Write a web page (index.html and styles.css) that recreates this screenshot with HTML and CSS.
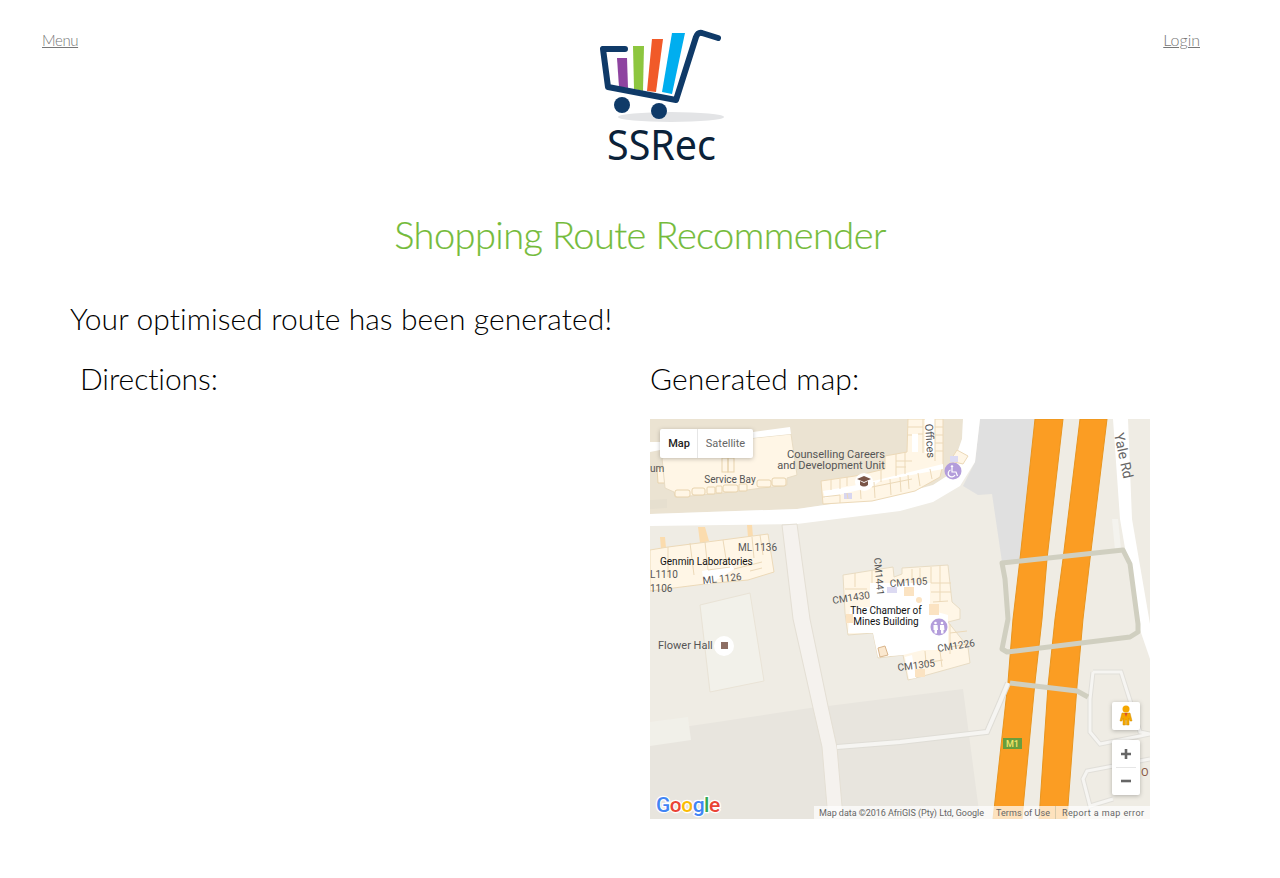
FILE: index.html
```html
<!DOCTYPE html>
<html lang="en">

<head>
    <title>SSRec - Shopping Route Recommender</title>
    <meta name="viewport" content="width=device-width, initial-scale=1.0">
    <link rel="stylesheet" href="styles.css">
</head>

<body>
    <header class="topbar">
        <a class="nav-link nav-menu" href="#">Menu</a>
        <svg class="logo" width="160" height="156" viewBox="0 0 160 156">
            <ellipse cx="91" cy="97" rx="53" ry="5" fill="#e3e4e6"/>
            <polygon points="37,38 47,38 48,68 39,67" fill="#8e44a0"/>
            <polygon points="53,26 64,26 63,71 54,69" fill="#8dc63f"/>
            <polygon points="72,19 83,19 76,72 67,71" fill="#f15a29"/>
            <polygon points="92,13 105,13 92,74 82,72" fill="#00aeef"/>
            <path d="M138,18 L122,13 Q118,12 116,17 L96,80 L28,67 L23,29 L45,29" fill="none" stroke="#0f3a68" stroke-width="6" stroke-linecap="round" stroke-linejoin="round"/>
            <circle cx="42" cy="85" r="8" fill="#0f3a68"/>
            <circle cx="79" cy="91" r="8" fill="#0f3a68"/>
            <text class="logo-text" x="27" y="140" textLength="109" lengthAdjust="spacingAndGlyphs">SSRec</text>
        </svg>
        <a class="nav-link nav-login" href="#">Login</a>
    </header>

    <h1 class="title">Shopping Route Recommender</h1>

    <main class="content">
        <h2 class="result">Your optimised route has been generated!</h2>
        <div class="columns">
            <section class="directions">
                <h3>Directions:</h3>
            </section>
            <section class="map-col">
                <h3>Generated map:</h3>
                <svg class="map" width="500" height="400" viewBox="0 0 500 400">
                    <rect width="500" height="400" fill="#efece4"/>

                    <!-- ground -->
                    <polygon points="0,313 160,289 178,287 313,270 330,400 0,400" fill="#e8e5de"/>
                    <polygon points="0,303 38,298 41,321 0,327" fill="#f1f0e9"/>
                    <polygon points="50,186 100,174 114,262 60,273" fill="#f2f1ea" stroke="#e9e3d6"/>
                    <polygon points="0,0 313,0 312,20 300,55 283,66 250,75 147,90 0,95" fill="#ebe3d2"/>
                    <polygon points="330,0 385,0 370,142 352,143 342,75 328,76 313,67 325,43" fill="#e0e0e0"/>

                    <!-- roads -->
                    <polygon points="0,95 147,90 250,75 283,66 300,55 312,20 313,0 330,0 325,43 310,67 283,83 250,92 147,105 0,107" fill="#ffffff"/>
                    <path d="M132,106 L147,105 L160,200 L178,287 L187,328 L192,387 L193,400 L178,400 L172,328 L163,289 L143,200 Z" fill="#f5f2ee" stroke="#e4dfd4" stroke-width="1"/>
                    <polygon points="463,0 478,0 482,100 500,205 500,240 488,205 470,100" fill="#ffffff"/>
                    <polygon points="462,100 468,100 471,130 465,131" fill="#f4f3ee"/>
                    <path d="M443,253 L471,253 L490,313 L500,315 M443,253 L440,280 L440,313 L450,325 L490,317 L500,315 M500,340 L437,352 L433,360 L440,387 L463,380" fill="none" stroke="#e1dfd9" stroke-width="5"/>
                    <path d="M443,253 L471,253 L490,313 L500,315 M443,253 L440,280 L440,313 L450,325 L490,317 L500,315 M500,340 L437,352 L433,360 L440,387 L463,380" fill="none" stroke="#f6f5f2" stroke-width="3"/>

                    <!-- motorway -->
                    <polygon points="385,0 413,0 397,140 392,200 385,263 372,400 343,400 358,263 363,200 370,140" fill="#fb9d23" stroke="#e8951f"/>
                    <polygon points="430,0 457,0 440,140 433,200 427,267 417,400 389,400 398,267 405,200 413,140" fill="#fb9d23" stroke="#e8951f"/>
                    <path d="M187,328 L250,323 L337,313 L350,283 L358,264" fill="none" stroke="#dfddd6" stroke-width="6"/>
                    <path d="M187,328 L250,323 L337,313 L350,283 L358,264" fill="none" stroke="#f6f5f2" stroke-width="4"/>
                    <path d="M352,144 L473,131 L480,145 L488,205 L488,213 L480,218 L357,233 L352,230 L358,200 L355,160 Z" fill="none" stroke="#d0cfc0" stroke-width="5" stroke-linejoin="round"/>
                    <path d="M360,264 L427,272 L438,278" fill="none" stroke="#d0cfc0" stroke-width="5"/>
                    <rect x="353" y="319" width="19" height="11" fill="#6a9e3c"/>
                    <text class="shield" x="362.5" y="328">M1</text>

                    <!-- service bay block -->
                    <polygon points="0,23 10,23 10,31 0,33" fill="#ffffff"/>
                    <polygon points="7,49 15,49 15,64 8,64" fill="#fff6e6" stroke="#e8d3ad"/>
                    <polygon points="12,39 103,19 141,15 147,56 137,59 137,66 122,68 112,69 97,71 73,74 40,77 25,78 24,73 15,69" fill="#fff6e6" stroke="#e8dcc4"/>
                    <polygon points="103,13 140,8 141,15 103,19" fill="#ffffff"/>
                    <rect x="72" y="39" width="6" height="14" fill="none" stroke="#e8d3ad"/>
                    <rect x="78" y="39" width="6" height="14" fill="none" stroke="#e8d3ad"/>
                    <g fill="#fff6e6" stroke="#e8d3ad">
                        <rect x="25" y="71" width="15" height="7" rx="2"/>
                        <rect x="42" y="69" width="13" height="7" rx="2"/>
                        <rect x="57" y="68" width="8" height="7" rx="1"/>
                        <rect x="66" y="67" width="6" height="7" rx="1"/>
                        <rect x="73" y="66" width="15" height="7" rx="2"/>
                        <rect x="89" y="65" width="8" height="7" rx="1"/>
                        <rect x="107" y="61" width="14" height="7" rx="2"/>
                        <rect x="122" y="59" width="14" height="8" rx="2"/>
                    </g>
                    <polygon points="0,81 17,80 17,89 0,90" fill="#e6dfcf"/>

                    <!-- counselling and offices block -->
                    <polygon points="171,62 205,57 235,50 235,37 257,33 258,0 293,0 293,45 290,58 265,72 222,82 173,85" fill="#fff6e6" stroke="#ecd9b8"/>
                    <polygon points="173,72 207,66 293,45 293,50 230,62 222,68 175,79" fill="#ffffff"/>
                    <rect x="262" y="15" width="6" height="18" fill="#ffffff"/>
                    <rect x="275" y="0" width="10" height="34" fill="#ffffff"/>
                    <rect x="194" y="74" width="8" height="6" fill="#d8d6f0"/>
                    <path d="M181,61 v10 M190,60 v10 M197,58 v9 M231,51 v12 M246,35 v22 M255,33 v22 M173,78 L190,76 M190,76 v8 M198,80 l-1,-6 M210,64 l1,16 M224,63 l1,16 M240,60 l1,16 M250,58 l1,15 M258,56 l1,14 M268,54 l2,13 M280,50 l2,10 M222,68 L262,60" fill="none" stroke="#ecd9b8"/>
                    <path d="M258,8 h15 M258,16 h4 M268,15 h5 M273,0 v34 M285,0 v42 M285,8 h8 M285,16 h8 M285,24 h8 M285,32 h8 M246,42 h16 M246,48 h10" fill="none" stroke="#ecd9b8"/>
                    <polygon points="300,42 307,31 318,37 313,45" fill="#fff6e6" stroke="#ecd9b8"/>
                    <polygon points="300,37 308,37 308,43 300,43" fill="#dcdaf2"/>

                    <!-- genmin block -->
                    <polygon points="10,118 15,118 16,129 11,130" fill="#fbdcae"/>
                    <polygon points="48,108 55,108 59,122 50,124" fill="#fbdcae"/>
                    <polygon points="97,106 102,106 103,118 98,118" fill="#fbdcae"/>
                    <polygon points="0,131 18,128 57,123 118,115 124,153 98,161 55,165 0,172" fill="#fff6e6" stroke="#ecd9b8"/>
                    <polygon points="52,152 82,146 84,150 60,165 54,165" fill="#ffffff"/>
                    <path d="M18,128 v30 M40,124 l4,32 M55,123 l3,28 M73,121 l4,25 M102,118 l2,21 M110,116 l3,20 M58,151 L80,148 M84,150 L112,143 M100,152 l12,-3" fill="none" stroke="#ecd9b8"/>

                    <!-- chamber of mines block -->
                    <polygon points="193,156 243,148 244,158 252,155 252,149 298,146 302,183 310,190 310,200 298,203 318,228 320,244 277,256 258,261 253,236 228,239 223,214 198,216 195,194" fill="#fff6e6" stroke="#e8dcc4"/>
                    <polygon points="220,164 280,164 280,191 298,196 298,231 273,231 253,236 228,238 223,214 198,214 200,189 220,188" fill="#ffffff"/>
                    <polygon points="255,238 262,236 266,259 259,260" fill="#ffffff"/>
                    <rect x="265" y="250" width="10" height="8" fill="#fbe3c2"/>
                    <rect x="237" y="168" width="10" height="6" fill="#dcdaf2"/>
                    <rect x="254" y="168" width="10" height="9" fill="#fbe3c2"/>
                    <rect x="279" y="185" width="10" height="11" fill="#fbe3c2"/>
                    <rect x="196" y="195" width="7" height="9" fill="#fbe3c2"/>
                    <circle cx="269" cy="181" r="3" fill="#fbe3c2"/>
                    <polygon points="228,229 235,227 238,236 230,238" fill="#fbe8cf" stroke="#d9b58c"/>
                    <path d="M205,154 v14 M222,152 v12 M195,170 h22 M262,150 v14 M270,149 v15 M281,148 v16 M290,147 v36 M281,164 h20 M281,173 h20 M283,183 l15,-1 M300,205 v30 M300,214 l17,-2 M300,228 l18,-3 M275,232 l1,12 M290,232 l2,16 M275,244 l18,-3" fill="none" stroke="#ecd9b8"/>

                    <!-- labels -->
                    <text class="label-md" x="186" y="39" text-anchor="middle">Counselling Careers</text>
                    <text class="label-md" x="181" y="50" text-anchor="middle">and Development Unit</text>
                    <text class="label" x="80" y="64" text-anchor="middle">Service Bay</text>
                    <text class="label" x="0" y="53">um</text>
                    <text class="label-md" transform="translate(275,5) rotate(86)">Offices</text>
                    <text class="label-lg" transform="translate(464,15) rotate(78)">Yale Rd</text>
                    <text class="label" x="88" y="132">ML 1136</text>
                    <text class="label-dark" x="10" y="146">Genmin Laboratories</text>
                    <text class="label" transform="translate(53,165) rotate(-6)">ML 1126</text>
                    <text class="label" x="0" y="159">L1110</text>
                    <text class="label" x="0" y="173">1106</text>
                    <text class="label" transform="translate(224,139) rotate(85)">CM1441</text>
                    <text class="label" transform="translate(183,185) rotate(-9)">CM1430</text>
                    <text class="label" transform="translate(240,168) rotate(-4)">CM1105</text>
                    <text class="label-dark" x="236" y="195" text-anchor="middle">The Chamber of</text>
                    <text class="label-dark" x="236" y="206" text-anchor="middle">Mines Building</text>
                    <text class="label" transform="translate(288,233) rotate(-9)">CM1226</text>
                    <text class="label" transform="translate(248,252) rotate(-7)">CM1305</text>
                    <text class="label-md" x="8" y="230">Flower Hall</text>
                    <text class="label-brown" x="491" y="357">O</text>

                    <!-- poi icons -->
                    <circle cx="214" cy="63" r="9" fill="#ffffff"/>
                    <path d="M207,60 L214,57 L221,60 L214,63 Z M210,62 V66 Q214,69 218,66 V62 L214,64 Z" fill="#795548"/>
                    <circle cx="303" cy="52" r="8.5" fill="#b39ddb"/>
                    <circle cx="302" cy="47.5" r="1.2" fill="#ffffff"/>
                    <path d="M302,49 V53 H306 L307.5,57 M300.5,51 A3.6,3.6 0 1 0 305,56" fill="none" stroke="#ffffff" stroke-width="1.2"/>
                    <circle cx="289" cy="208" r="8.5" fill="#b39ddb"/>
                    <path d="M283.5,206 h4 l0.5,5 h-1 v3.5 h-2.5 v-3.5 h-1 z M290,206 h4 l0.5,5 h-1 v3.5 h-2.5 v-3.5 h-1 z" fill="#ffffff"/>
                    <circle cx="285.5" cy="204" r="1.3" fill="#ffffff"/>
                    <circle cx="292" cy="204" r="1.3" fill="#ffffff"/>
                    <circle cx="74" cy="227" r="10" fill="#ffffff"/>
                    <rect x="71" y="223" width="7" height="7" fill="#8d6e63"/>

                    <!-- controls -->
                    <rect class="ctrl" x="10" y="10" width="93" height="29" rx="2"/>
                    <line x1="47.5" y1="10" x2="47.5" y2="39" stroke="#e6e6e6"/>
                    <text class="ctrl-on" x="29" y="28" text-anchor="middle">Map</text>
                    <text class="ctrl-off" x="75.5" y="28" text-anchor="middle">Satellite</text>

                    <rect class="ctrl" x="462" y="283" width="28" height="28" rx="2"/>
                    <circle cx="476" cy="290" r="3.5" fill="#f5a700"/>
                    <path d="M472,294 h8 l2,8 h-2 l-1,-3 v7 h-2.5 v-5 h-1 v5 h-2.5 v-7 l-1,3 h-2 z" fill="#f5a700" stroke="#d08f00" stroke-width="0.5"/>
                    <polygon points="474.5,294 477.5,294 476,298" fill="#d8502a"/>

                    <rect class="ctrl" x="462" y="321" width="28" height="55" rx="2"/>
                    <line x1="466" y1="348.5" x2="486" y2="348.5" stroke="#e6e6e6"/>
                    <path d="M471,335 h10 M476,330 v10" stroke="#666666" stroke-width="2.6"/>
                    <path d="M471,362 h10" stroke="#666666" stroke-width="2.6"/>

                    <!-- footer -->
                    <text class="google" x="6" y="393"><tspan fill="#4285f4">G</tspan><tspan fill="#ea4335">o</tspan><tspan fill="#fbbc05">o</tspan><tspan fill="#4285f4">g</tspan><tspan fill="#34a853">l</tspan><tspan fill="#ea4335">e</tspan></text>
                    <rect x="164" y="387" width="336" height="13" fill="#ffffff" fill-opacity="0.7"/>
                    <text class="attrib" x="169" y="397" textLength="165">Map data ©2016 AfriGIS (Pty) Ltd, Google</text>
                    <text class="attrib" x="346" y="397" textLength="54">Terms of Use</text>
                    <line x1="405.5" y1="387" x2="405.5" y2="400" stroke="#d8c9a8"/>
                    <text class="attrib" x="412" y="397" textLength="82">Report a map error</text>
                </svg>
            </section>
        </div>
    </main>
</body>
</html>
```

FILE: styles.css
```css
body {
    margin: 0;
    background-color: #fff;
    color: #000;
    font-family: "Lato", "Liberation Sans", sans-serif;
    font-weight: 300;
}
.topbar {
    display: grid;
    grid-template-columns: 538px 160px 1fr;
    align-items: start;
    height: 170px;
    padding: 20px 80px 0 42px;
}
.nav-link {
    margin-top: 11px;
    color: #777;
    font-size: 16px;
    line-height: 18px;
}
.nav-menu {
    font-size: 15px;
    letter-spacing: -0.4px;
}
.nav-login {
    justify-self: end;
}
.logo {
    display: block;
}
.logo-text {
    font-family: "Noto Sans", sans-serif;
    font-size: 42px;
    font-weight: 400;
    fill: #0b2239;
}
.title {
    margin: 0;
    height: 111px;
    padding-top: 21px;
    box-sizing: border-box;
    text-align: center;
    color: #74bb3a;
    font-size: 38px;
    line-height: 46px;
    font-weight: 300;
    letter-spacing: -0.58px;
    -webkit-text-stroke: 0.2px #74bb3a;
}
.content {
    padding-left: 70px;
}
.result {
    margin: -2px 0 0 0;
    font-size: 30px;
    line-height: 38px;
    font-weight: 300;
    letter-spacing: 0.08px;
}
.columns {
    display: flex;
    margin-top: 22px;
}
.directions {
    width: 580px;
    padding-left: 10px;
    box-sizing: border-box;
}
.directions h3 {
    letter-spacing: -0.1px;
}
h3 {
    margin: 0 0 22px 0;
    font-size: 30px;
    line-height: 38px;
    font-weight: 300;
    letter-spacing: 0.15px;
}
.map {
    display: block;
}
.label, .label-md, .label-dark, .label-brown, .label-lg {
    font-family: "Roboto", sans-serif;
    font-size: 10px;
    font-weight: 400;
    fill: #555;
}
.label-md {
    font-size: 11px;
}
.label-lg {
    font-size: 14px;
    fill: #666;
}
.label-dark {
    fill: #111;
}
.label-brown {
    fill: #8a5a44;
    font-size: 11px;
}
.shield {
    font-family: "Roboto", sans-serif;
    font-size: 9px;
    font-weight: 500;
    fill: #f5e56b;
    text-anchor: middle;
}
.ctrl {
    fill: #fff;
    filter: drop-shadow(0 1px 2px rgba(0, 0, 0, 0.25));
}
.ctrl-on, .ctrl-off {
    font-family: "Roboto", sans-serif;
    font-size: 11px;
}
.ctrl-on {
    font-weight: 500;
    fill: #222;
}
.ctrl-off {
    font-weight: 400;
    fill: #666;
}
.google {
    font-family: "Roboto", sans-serif;
    font-size: 21px;
    font-weight: 500;
    letter-spacing: -0.5px;
    stroke: #fff;
    stroke-width: 2.5px;
    paint-order: stroke;
}
.attrib {
    font-family: "Roboto", sans-serif;
    font-size: 9px;
    font-weight: 400;
    fill: #666;
}
```
